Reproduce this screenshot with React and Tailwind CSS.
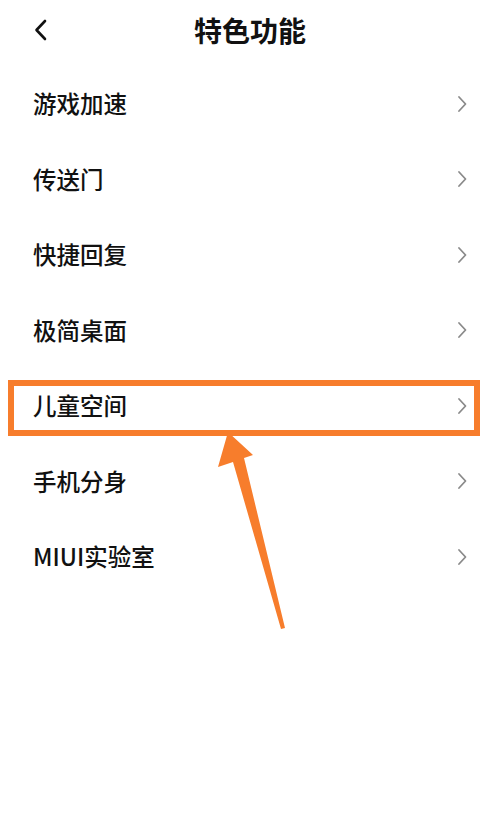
const items = ["游戏加速", "传送门", "快捷回复", "极简桌面", "儿童空间", "手机分身", "MIUI实验室"];

function Chevron() {
  return (
    <svg width="12" height="18" viewBox="0 0 12 18" className="shrink-0">
      <path d="M3 2 L9.5 9 L3 16" fill="none" stroke="#8a8a8a" strokeWidth="1.8" strokeLinecap="round" strokeLinejoin="round" />
    </svg>
  );
}

export default function App() {
  return (
    <div
      className="relative w-[500px] h-[831px] bg-white overflow-hidden text-[#111]"
      style={{ fontFamily: '"Noto Sans CJK SC", "Noto Sans", sans-serif' }}
    >
      {/* header */}
      <div className="relative h-[66px] flex items-start justify-center">
        <svg width="16" height="24" viewBox="0 0 16 24" className="absolute left-[33px] top-[18px]">
          <path d="M12 3 L3.5 12 L12 21" fill="none" stroke="#111" strokeWidth="2.6" strokeLinecap="round" strokeLinejoin="round" />
        </svg>
        <h1 className="mt-[8px] text-[28px] font-bold leading-[44px]">特色功能</h1>
      </div>

      {/* list */}
      <div className="flex flex-col">
        {items.map((label, i) => (
          <div key={label} className="relative h-[75.5px] flex items-center justify-between pl-[33px] pr-[32px]">
            <span className="text-[23.5px] font-medium leading-none">{label}</span>
            <Chevron />
            {i === 4 && (
              <div className="absolute left-[8px] right-[20px] top-[12px] bottom-[8px] border-[6px] border-[#f77d2c]" />
            )}
          </div>
        ))}
      </div>

      {/* arrow */}
      <svg className="absolute left-0 top-0 pointer-events-none" width="500" height="831">
        <polygon points="228,432 218,467 233,462 281,629 285,628 244,458 253,455" fill="#f77d2c" />
      </svg>
    </div>
  );
}
